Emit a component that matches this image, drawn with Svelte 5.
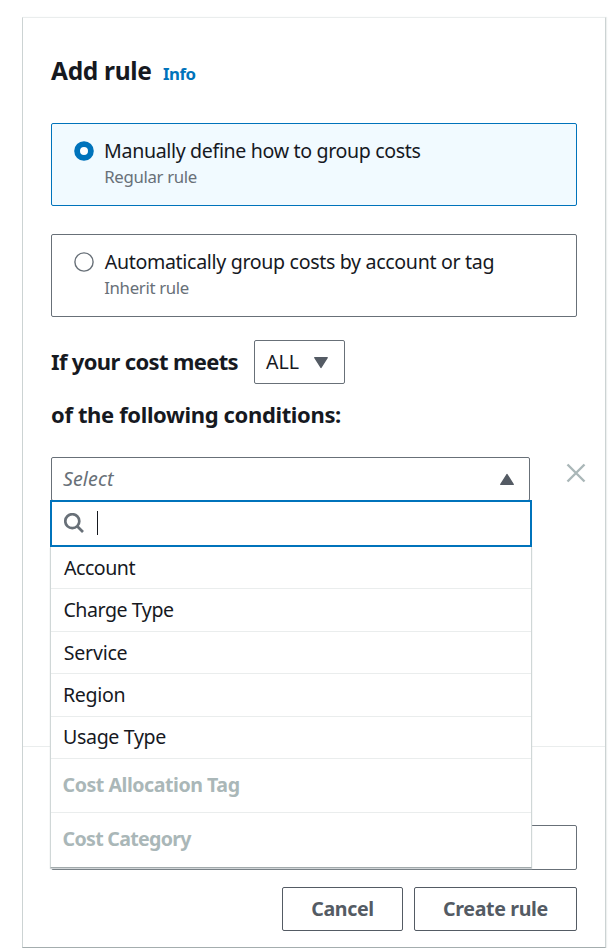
<script>
  const rules = [
    { title: 'Manually define how to group costs', note: 'Regular rule', kind: 'manual' },
    { title: 'Automatically group costs by account or tag', note: 'Inherit rule', kind: 'auto' }
  ];
  const dimensions = [
    { label: 'Account', kind: 'account' },
    { label: 'Charge Type', kind: 'charge' },
    { label: 'Service', kind: 'service' },
    { label: 'Region', kind: 'region' },
    { label: 'Usage Type', kind: 'usage' },
    { label: 'Cost Allocation Tag', kind: 'group tag' },
    { label: 'Cost Category', kind: 'group category' }
  ];
  let selected = $state('manual');
</script>

<main class="card">
  <section class="rule">
    <header>
      <h2>Add rule</h2>
      <a class="info" href="#info">Info</a>
    </header>

    <div class="options">
      {#each rules as r}
        <button class="option {r.kind}" class:on={selected === r.kind} onclick={() => (selected = r.kind)}>
          <svg class="radio" viewBox="0 0 20 20">
            {#if selected === r.kind}
              <circle cx="10" cy="10" r="6.9" fill="#fff" stroke="#0073bb" stroke-width="5.8" />
            {:else}
              <circle cx="10" cy="10" r="9.1" fill="#fff" stroke="#687078" stroke-width="1.4" />
            {/if}
          </svg>
          <span class="copy">
            <span class="title">{r.title}</span>
            <span class="note">{r.note}</span>
          </span>
        </button>
      {/each}
    </div>

    <div class="meets">
      <h3 class="lead">If your cost meets</h3>
      <div class="all">
        <span>ALL</span>
        <svg class="tri" viewBox="0 0 16 13"><path d="M1.8 1.6H14.2L8 11.4Z" /></svg>
      </div>
    </div>
    <h3 class="following">of the following conditions:</h3>

    <div class="condition">
      <div class="select">
        <span class="placeholder">Select</span>
        <svg class="tri" viewBox="0 0 16 13"><path d="M1.8 11.4H14.2L8 1.6Z" /></svg>
        <div class="dropdown">
          <div class="search">
            <svg viewBox="0 0 20 20"><circle cx="8.3" cy="8.2" r="7" /><path d="M13.2 13.2L19 19" /></svg>
            <i class="caret"></i>
          </div>
          <ul>
            {#each dimensions as d}
              <li class={d.kind}>{d.label}</li>
            {/each}
          </ul>
        </div>
      </div>
      <svg class="close" viewBox="0 0 20 20"><path d="M1.5 1.5L18.5 18.5M18.5 1.5L1.5 18.5" /></svg>
    </div>
  </section>

  <section class="foot">
    <div class="field"></div>
    <div class="actions">
      <button class="btn cancel">Cancel</button>
      <button class="btn create">Create rule</button>
    </div>
  </section>
</main>

<style>
  :global(body) { background: #fff; }
  :global(#app) { padding-top: 17px; height: 948px; box-sizing: border-box; overflow: hidden; }
  * { box-sizing: border-box; }
  .card {
    display: flex;
    flex-direction: column;
    width: 584px;
    height: 931px;
    margin-left: 22px;
    border: 1px solid #ccd3d3;
    border-top-color: #eaeded;
    border-bottom-color: #a4adae;
    color: #16191f;
    font-family: 'Noto Sans', 'Open Sans', sans-serif;
    font-size: 19.6px;
    box-shadow: 1px 0 1px #eef0f0;
  }
  .rule {
    height: 729px;
    padding: 38px 28px 0;
    border-bottom: 1px solid #eaeded;
  }
  header { display: flex; align-items: baseline; height: 30px; margin-bottom: 37px; }
  h2, h3 { margin: 0; line-height: 30px; font-weight: 700; white-space: nowrap; }
  h2 { width: 112px; font-size: 24.5px; letter-spacing: -0.3px; }
  .info { color: #0073bb; font-size: 16.8px; font-weight: 700; letter-spacing: -0.5px; text-decoration: none; }
  .options { display: flex; flex-direction: column; gap: 28px; }
  .option {
    display: flex;
    width: 526px;
    height: 83px;
    padding: 12px 22px;
    border: 1px solid #687078;
    border-radius: 2px;
    background: #fff;
    color: inherit;
    font: inherit;
    text-align: left;
  }
  .option.on { border-color: #0073bb; background: #f1faff; }
  .radio { width: 20px; height: 20px; margin: 4.5px 10px 0 -0.3px; flex: none; }
  .copy { display: flex; flex-direction: column; padding-top: 1px; }
  .title { margin-left: 1px; line-height: 28px; letter-spacing: -0.33px; white-space: nowrap; }
  .manual .title { margin-left: 0.4px; letter-spacing: -0.35px; }
  .note { margin: 1px 0 0 0.5px; line-height: 22px; font-size: 16.8px; color: #687078; letter-spacing: -0.33px; }
  .meets { display: flex; align-items: center; height: 44px; margin-top: 23px; }
  h3 { font-size: 22px; }
  .lead { width: 203px; padding-bottom: 2px; letter-spacing: -0.65px; }
  .all {
    display: flex;
    align-items: center;
    justify-content: space-between;
    width: 91px;
    height: 44px;
    padding: 0 15px 0 11px;
    border: 1px solid #687078;
    border-radius: 2px;
  }
  .all span { line-height: 28px; }
  .tri { width: 16px; height: 13px; fill: #545b64; stroke: #545b64; stroke-width: 1.4; stroke-linejoin: round; }
  .following { margin: 15px 0 28px; letter-spacing: -0.36px; }
  .condition { display: flex; gap: 36px; }
  .select {
    position: relative;
    display: flex;
    align-items: center;
    justify-content: space-between;
    width: 479px;
    height: 44px;
    flex: none;
    padding: 0 14px 0 11px;
    border: 1px solid #687078;
    border-radius: 2px;
  }
  .placeholder { padding-bottom: 2px; color: #687078; font-style: italic; letter-spacing: 0.1px; }
  .close { width: 20px; height: 20px; margin-top: 6px; flex: none; fill: none; stroke: #aab7b8; stroke-width: 2.4; }
  .dropdown { position: absolute; top: 42px; left: -2px; width: 482px; z-index: 2; background: #fff; }
  .search { display: flex; align-items: center; height: 47px; padding-left: 11.5px; border: 2px solid #0073bb; }
  .search svg { width: 20px; height: 20px; margin-bottom: 1px; fill: none; stroke: #687078; stroke-width: 2.7; }
  .caret { width: 1px; height: 24px; margin: 0 0 2px 13.5px; background: #16191f; }
  ul {
    margin: 0;
    padding: 0;
    list-style: none;
    border: 1px solid #d0d7d7;
    border-top: 0;
    border-bottom-color: #a2aaac;
    box-shadow: 0 1px 1px #d0d4d6;
  }
  li {
    display: flex;
    align-items: center;
    height: 42.4px;
    padding: 0 0 0.6px 12.4px;
    border-bottom: 1px solid #eaeded;
    letter-spacing: -0.35px;
  }
  li.account { padding-left: 13px; letter-spacing: -0.5px; }
  li.charge { letter-spacing: -0.45px; }
  li.service { padding-left: 12.8px; padding-bottom: 0; letter-spacing: -0.25px; }
  li.region, li.usage { padding-left: 12px; letter-spacing: -0.35px; }
  li.group { height: 54px; padding: 0 0 1px 11.6px; color: #aab7b8; font-weight: 700; letter-spacing: -0.47px; }
  li.category { padding-bottom: 2.5px; letter-spacing: -0.7px; border-bottom: 0; }
  .foot { padding: 78px 28px 0; }
  .field { height: 45px; border: 1px solid #687078; border-radius: 2px; }
  .actions { display: flex; justify-content: flex-end; gap: 11px; margin-top: 17px; }
  .btn {
    height: 44px;
    padding: 0 0 2px;
    border: 1px solid #545b64;
    border-radius: 2px;
    background: #fff;
    color: #545b64;
    font: 700 19.6px 'Noto Sans', 'Open Sans', sans-serif;
    letter-spacing: -0.35px;
  }
  .cancel { width: 121px; }
  .create { width: 163px; }
</style>
